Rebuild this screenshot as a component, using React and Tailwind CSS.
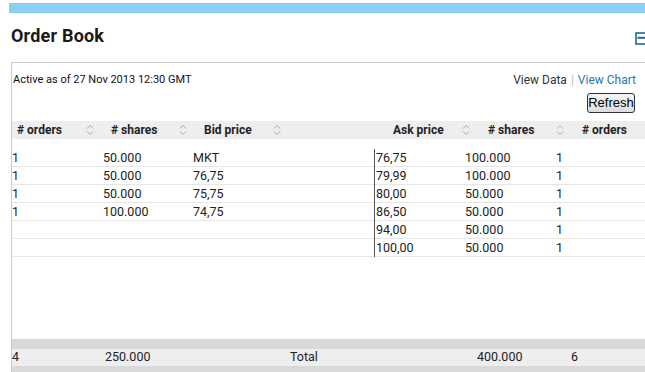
import React from 'react';

const bids = [
  ['1', '50.000', 'MKT'],
  ['1', '50.000', '76,75'],
  ['1', '50.000', '75,75'],
  ['1', '100.000', '74,75'],
  null,
  null,
];

const asks = [
  ['76,75', '100.000', '1'],
  ['79,99', '100.000', '1'],
  ['80,00', '50.000', '1'],
  ['86,50', '50.000', '1'],
  ['94,00', '50.000', '1'],
  ['100,00', '50.000', '1'],
];

function SortIcon() {
  return (
    <svg width="8" height="12" viewBox="0 0 8 12" className="shrink-0">
      <path d="M1 4.5 L4 1.5 L7 4.5" fill="none" stroke="#a8a8a8" strokeWidth="1" />
      <path d="M1 7.5 L4 10.5 L7 7.5" fill="none" stroke="#a8a8a8" strokeWidth="1" />
    </svg>
  );
}

function HeaderCell({ label, textW, sort = true, className }) {
  return (
    <div className={`flex items-center shrink-0 ${className}`}>
      <span className={`${textW} whitespace-nowrap`}>{label}</span>
      {sort && <SortIcon />}
    </div>
  );
}

function App() {
  return (
    <div
      className="w-[645px] h-[372px] overflow-hidden bg-white text-[#222]"
      style={{ fontFamily: 'Roboto, "Liberation Sans", sans-serif' }}
    >
      {/* top accent bar */}
      <div className="ml-[9px] mt-[3px] h-[10px] bg-[#89d0f5]" />

      {/* title row */}
      <div className="flex justify-between items-start h-[49px] pl-[11px] pt-[12px]">
        <h1 className="text-[18px] leading-[22px] font-bold text-[#1a1a1a] tracking-[0.2px]">Order Book</h1>
        <svg width="13" height="13" viewBox="0 0 13 13" className="shrink-0 mt-[7px] -mr-[3px]">
          <rect x="1" y="1" width="11" height="11" fill="white" stroke="#1d6a96" strokeWidth="1.6" />
          <rect x="2.5" y="4.8" width="8" height="2" fill="#1d6a96" />
        </svg>
      </div>

      {/* panel */}
      <div className="ml-[11px] border-l border-t border-[#cccccc] h-[320px]">
        <div className="flex justify-between h-[58px]">
          <div className="pl-[1px] pt-[9px] text-[11px] leading-[16px] text-[#111]">
            Active as of 27 Nov 2013 12:30 GMT
          </div>
          <div className="flex flex-col items-end pt-[9px] pr-[9px]">
            <div className="text-[12px] leading-[16px] whitespace-nowrap">
              <a href="#" className="text-[#333]">View Data</a>
              <span className="text-[#bbbbbb] mx-[4px]">|</span>
              <a href="#" className="text-[#2a78ab]">View Chart</a>
            </div>
            <button
              type="button"
              className="mt-[5px] mr-[1px] h-[20px] w-[48px] rounded-[3px] border border-[#2b3440] bg-gradient-to-b from-[#f6f6f6] to-[#dddddd] text-[13px] leading-[18px] text-black"
              style={{ fontFamily: '"Liberation Sans", Arial, sans-serif' }}
            >
              Refresh
            </button>
          </div>
        </div>

        {/* column headers */}
        <div className="flex items-center h-[18px] bg-[#eeeeee] text-[12px] font-bold text-[#222]">
          <HeaderCell label="# orders" textW="w-[69px]" className="w-[94px] pl-[5px]" />
          <HeaderCell label="# shares" textW="w-[68px]" className="w-[94px] pl-[5px]" />
          <HeaderCell label="Bid price" textW="w-[69px]" className="w-[94px] pl-[4px]" />
          <div className="w-[94px] shrink-0" />
          <HeaderCell label="Ask price" textW="w-[69px]" className="w-[94px] pl-[5px]" />
          <HeaderCell label="# shares" textW="w-[68px]" className="w-[94px] pl-[6px]" />
          <HeaderCell label="# orders" sort={false} textW="" className="pl-[6px]" />
        </div>

        {/* rows */}
        <div className="flex mt-[10px] text-[12.5px] leading-[17px] text-[#222]">
          <div className="w-[362px] shrink-0">
            {bids.map((r, i) => (
              <div key={i} className="flex h-[18px] border-b border-[#e6e6e6]">
                <span className="w-[91px] shrink-0">{r ? r[0] : ''}</span>
                <span className="w-[90px] shrink-0">{r ? r[1] : ''}</span>
                <span>{r ? r[2] : ''}</span>
              </div>
            ))}
          </div>
          <div className="flex-1 border-l border-[#555555]">
            {asks.map((r, i) => (
              <div key={i} className="flex h-[18px] pl-[1px] border-b border-[#e6e6e6]">
                <span className="w-[89px] shrink-0">{r[0]}</span>
                <span className="w-[91px] shrink-0">{r[1]}</span>
                <span>{r[2]}</span>
              </div>
            ))}
          </div>
        </div>

        <div className="h-[82px]" />

        {/* totals */}
        <div className="h-[10px] bg-[#d9d9d9]" />
        <div className="flex h-[17px] items-center bg-[#eeeeee] text-[12.5px] text-[#222]">
          <span className="w-[93px] shrink-0">4</span>
          <span className="w-[185px] shrink-0">250.000</span>
          <span className="w-[187px] shrink-0">Total</span>
          <span className="w-[94px] shrink-0">400.000</span>
          <span>6</span>
        </div>
        <div className="h-[12px] bg-[#d9d9d9]" />
      </div>
    </div>
  );
}

export default App;
